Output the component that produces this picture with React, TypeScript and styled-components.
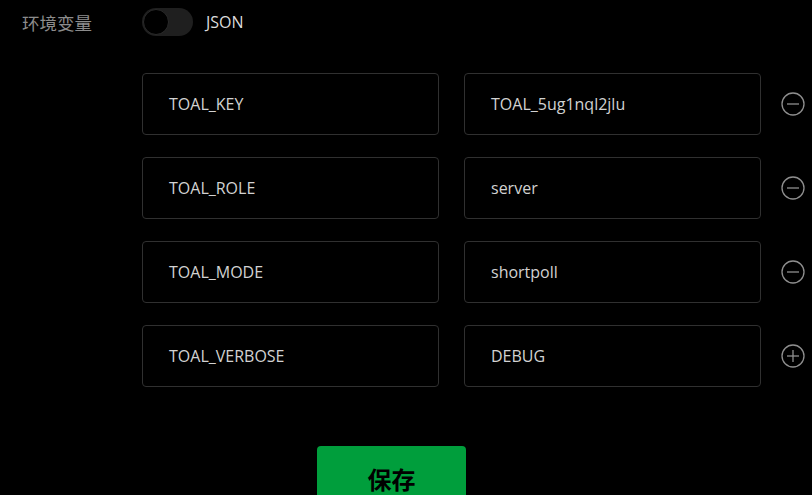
import React from "react";
import styled, { createGlobalStyle } from "styled-components";

const Global = createGlobalStyle`
  html, body { margin: 0; padding: 0; background: #000; }
  body { font-family: "Open Sans", "Noto Sans CJK SC", sans-serif; overflow: hidden; }
`;

const Page = styled.div`
  width: 812px;
  height: 495px;
  background: #000;
  display: flex;
  flex-direction: column;
  overflow: hidden;
  & > * { flex-shrink: 0; }
`;

const HeaderRow = styled.div`
  display: flex;
  align-items: center;
  height: 44px;
`;

const Label = styled.div`
  width: 142px;
  padding-left: 22px;
  box-sizing: border-box;
  color: #8c8c8c;
  font-size: 17.5px;
  font-family: "Noto Sans CJK SC", sans-serif;
`;

const Toggle = styled.div`
  width: 51px;
  height: 28px;
  border-radius: 14px;
  background: #1f1f1f;
  position: relative;
  box-sizing: border-box;
`;

const Knob = styled.div`
  position: absolute;
  left: 1px;
  top: 1px;
  width: 26px;
  height: 26px;
  border-radius: 50%;
  background: #000;
  border: 1px solid #2a2a2a;
  box-sizing: border-box;
`;

const ToggleText = styled.span`
  margin-left: 13px;
  color: #dcdcdc;
  font-size: 16px;
`;

const List = styled.div`
  display: flex;
  flex-direction: column;
  gap: 22px;
  padding-left: 142px;
  margin-top: 29px;
`;

const Row = styled.div`
  display: flex;
  align-items: center;
`;

const Field = styled.div`
  width: 297px;
  height: 62px;
  box-sizing: border-box;
  border: 1px solid #303030;
  border-radius: 4px;
  display: flex;
  align-items: center;
  padding-left: 26px;
  color: #d2d2d2;
  font-size: 16px;
  & + & { margin-left: 25px; }
`;

const IconBtn = styled.div`
  margin-left: 20px;
  width: 24px;
  height: 24px;
  display: flex;
  color: #8f8f8f;
`;

const Footer = styled.div`
  display: flex;
  padding-left: 317px;
  margin-top: 59px;
`;

const SaveBtn = styled.button`
  width: 149px;
  height: 64px;
  flex-shrink: 0;
  background: #009e3c;
  border: none;
  border-radius: 4px;
  color: #000;
  font-weight: 700;
  font-size: 24px;
  font-family: "Noto Sans CJK SC", sans-serif;
  padding: 0;
`;

const Circle = ({ plus }: { plus?: boolean }) => (
  <svg width="24" height="24" viewBox="0 0 24 24" fill="none" stroke="currentColor" strokeWidth="1.3">
    <circle cx="12" cy="12" r="11" />
    <line x1="6" y1="12" x2="18" y2="12" />
    {plus && <line x1="12" y1="6" x2="12" y2="18" />}
  </svg>
);

const rows = [
  ["TOAL_KEY", "TOAL_5ug1nql2jlu"],
  ["TOAL_ROLE", "server"],
  ["TOAL_MODE", "shortpoll"],
  ["TOAL_VERBOSE", "DEBUG"],
];

export default function App() {
  return (
    <Page>
      <Global />
      <HeaderRow>
        <Label>环境变量</Label>
        <Toggle>
          <Knob />
        </Toggle>
        <ToggleText>JSON</ToggleText>
      </HeaderRow>
      <List>
        {rows.map(([k, v], i) => (
          <Row key={k}>
            <Field>{k}</Field>
            <Field>{v}</Field>
            <IconBtn>
              <Circle plus={i === rows.length - 1} />
            </IconBtn>
          </Row>
        ))}
      </List>
      <Footer>
        <SaveBtn>保存</SaveBtn>
      </Footer>
    </Page>
  );
}
